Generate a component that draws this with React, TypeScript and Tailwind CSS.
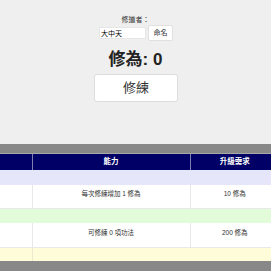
export default function App() {
  const font = "font-['Liberation_Sans','Noto_Sans_CJK_TC',sans-serif]";
  return (
    <div className={`w-[271px] h-[271px] overflow-hidden bg-[#efefef] ${font} flex flex-col`}>
      <div className="h-[144px] flex flex-col items-center text-[#333]">
        <div className="mt-[15px] h-[10px] leading-[10px] text-[7px]">修道者：</div>
        <div className="flex items-center gap-[2px] h-[16px] ml-[1px]">
          <input
            defaultValue="大中天"
            className="w-[47px] h-[12px] bg-white border border-[#e6e6e6] px-[1px] text-[7px] text-black outline-none"
          />
          <button className="w-[25px] h-[16px] bg-white border border-[#e0e0e0] rounded-[2px] text-[7px] text-[#333]">
            命名
          </button>
        </div>
        <div className="mt-[9px] h-[20px] leading-[20px] text-[17px] font-bold text-[#222]">修為: 0</div>
        <button className="mt-[4px] w-[84px] h-[28px] bg-white border border-[#dddddd] rounded-[3px] text-[13px] text-[#333] ml-[1px]">
          修練
        </button>
      </div>
      <div className="h-[10px] bg-[#888888] border-b border-[#a8a8a8]" />
      <table className="w-[279px] border-collapse table-fixed text-[6.5px] text-[#333]">
        <colgroup>
          <col className="w-[32px]" />
          <col className="w-[158px]" />
          <col className="w-[89px]" />
        </colgroup>
        <tbody>
          <tr className="h-[16px] bg-[#000066] text-white text-[7.5px] font-bold">
            <td />
            <td className="border-l border-[#7f7faf] text-center">能力</td>
            <td className="border-l border-[#7f7faf] text-center">升級需求</td>
          </tr>
          <tr className="h-[15px] bg-[#e6e6fa]">
            <td colSpan={3} />
          </tr>
          <tr className="h-[23px] bg-white">
            <td className="border-r border-[#e8e8e8]" />
            <td className="border-r border-[#e8e8e8] text-center align-top pt-[4px]">每次修練增加 1 修為</td>
            <td className="text-center align-top pt-[4px]">10 修為</td>
          </tr>
          <tr className="h-[15px] bg-[#e2fcd9] border-t border-[#e8e8e8]">
            <td colSpan={3} />
          </tr>
          <tr className="h-[24px] bg-white">
            <td className="border-r border-[#e8e8e8]" />
            <td className="border-r border-[#e8e8e8] text-center align-top pt-[5px]">可修練 0 項功法</td>
            <td className="text-center align-top pt-[5px]">200 修為</td>
          </tr>
          <tr className="h-[14px] bg-[#fffdd9] border-t border-[#e8e8e8]">
            <td className="border-r border-[#ece9cf]" />
            <td colSpan={2} />
          </tr>
        </tbody>
      </table>
      <div className="flex-1 bg-[#888888]" />
    </div>
  );
}
